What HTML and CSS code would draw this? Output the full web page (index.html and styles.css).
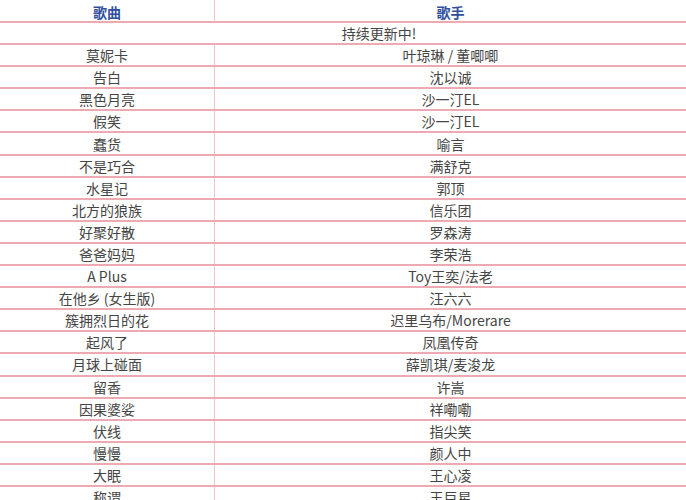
FILE: index.html
```html
<!DOCTYPE html>
<html lang="zh">
<head>
<meta charset="utf-8">
<link rel="stylesheet" href="styles.css">
</head>
<body>
<div class="table">
  <div class="row head"><div class="c1">歌曲</div><div class="c2">歌手</div></div>
  <div class="row span"><div class="full">持续更新中!</div></div>
  <div class="row"><div class="c1">莫妮卡</div><div class="c2">叶琼琳 / 董唧唧</div></div>
  <div class="row"><div class="c1">告白</div><div class="c2">沈以诚</div></div>
  <div class="row"><div class="c1">黑色月亮</div><div class="c2">沙一汀EL</div></div>
  <div class="row"><div class="c1">假笑</div><div class="c2">沙一汀EL</div></div>
  <div class="row"><div class="c1">蠢货</div><div class="c2">喻言</div></div>
  <div class="row"><div class="c1">不是巧合</div><div class="c2">满舒克</div></div>
  <div class="row"><div class="c1">水星记</div><div class="c2">郭顶</div></div>
  <div class="row"><div class="c1">北方的狼族</div><div class="c2">信乐团</div></div>
  <div class="row"><div class="c1">好聚好散</div><div class="c2">罗森涛</div></div>
  <div class="row"><div class="c1">爸爸妈妈</div><div class="c2">李荣浩</div></div>
  <div class="row"><div class="c1">A Plus</div><div class="c2">Toy王奕/法老</div></div>
  <div class="row"><div class="c1">在他乡 (女生版)</div><div class="c2">汪六六</div></div>
  <div class="row"><div class="c1">簇拥烈日的花</div><div class="c2">迟里乌布/Morerare</div></div>
  <div class="row"><div class="c1">起风了</div><div class="c2">凤凰传奇</div></div>
  <div class="row"><div class="c1">月球上碰面</div><div class="c2">薛凯琪/麦浚龙</div></div>
  <div class="row"><div class="c1">留香</div><div class="c2">许嵩</div></div>
  <div class="row"><div class="c1">因果婆娑</div><div class="c2">祥嘞嘞</div></div>
  <div class="row"><div class="c1">伏线</div><div class="c2">指尖笑</div></div>
  <div class="row"><div class="c1">慢慢</div><div class="c2">颜人中</div></div>
  <div class="row"><div class="c1">大眠</div><div class="c2">王心凌</div></div>
  <div class="row"><div class="c1">称谓</div><div class="c2">王巨星</div></div>
</div>
</body>
</html>
```
FILE: styles.css
```css
html, body {
  margin: 0;
  padding: 0;
  background: #ffffff;
}
body {
  font-family: "Noto Sans CJK SC", "Noto Sans", sans-serif;
  font-size: 14px;
  color: #454545;
  overflow: hidden;
}
.table {
  display: flex;
  flex-direction: column;
  width: 686px;
}
.row {
  display: flex;
  height: 22.1px;
  box-sizing: border-box;
  border-bottom: 2px solid #eeaab2;
}
.row.head {
  height: 23px;
}
.c1, .c2, .full {
  display: flex;
  align-items: center;
  justify-content: center;
  line-height: 1;
  white-space: nowrap;
}
.c1 {
  width: 215px;
  box-sizing: border-box;
  border-right: 1px solid #f3c3ca;
}
.c2 {
  flex: 1;
}
.full {
  flex: 1;
  padding-left: 72px;
}
.head .c1, .head .c2 {
  color: #2f4f9e;
  font-weight: bold;
  padding-top: 2px;
}
```
